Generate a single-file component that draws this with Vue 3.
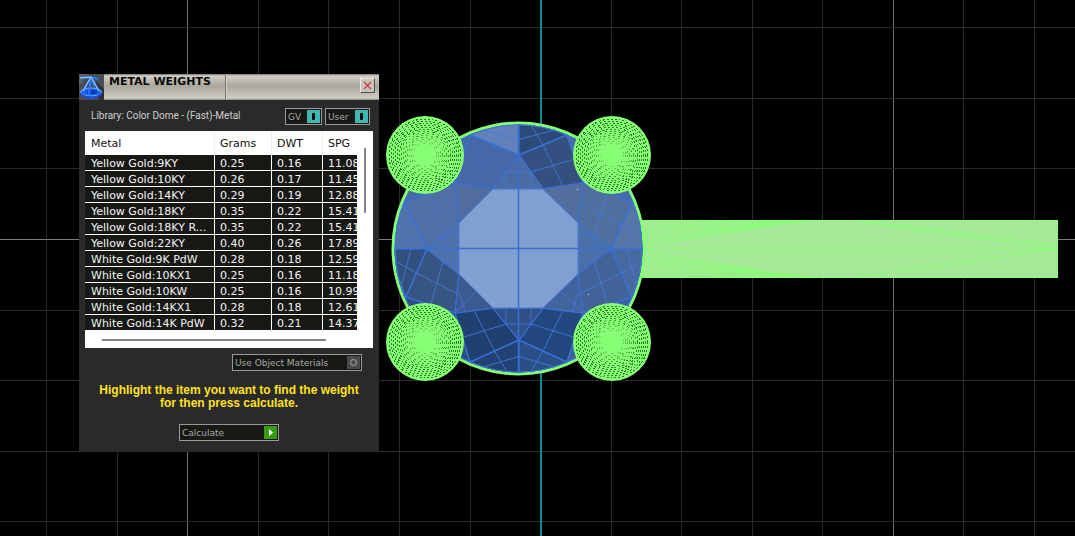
<script setup>
const cols = ['Metal', 'Grams', 'DWT', 'SPG']
const rows = [
  ['Yellow Gold:9KY', '0.25', '0.16', '11.08'],
  ['Yellow Gold:10KY', '0.26', '0.17', '11.45'],
  ['Yellow Gold:14KY', '0.29', '0.19', '12.88'],
  ['Yellow Gold:18KY', '0.35', '0.22', '15.41'],
  ['Yellow Gold:18KY R...', '0.35', '0.22', '15.41'],
  ['Yellow Gold:22KY', '0.40', '0.26', '17.89'],
  ['White Gold:9K PdW', '0.28', '0.18', '12.59'],
  ['White Gold:10KX1', '0.25', '0.16', '11.18'],
  ['White Gold:10KW', '0.25', '0.16', '10.99'],
  ['White Gold:14KX1', '0.28', '0.18', '12.61'],
  ['White Gold:14K PdW', '0.32', '0.21', '14.37'],
]

// Viewport grid: every tenth line is brighter
const gridX = [46, 117, 187, 258, 328, 399, 470, 611, 681, 752, 822, 893, 963, 1034]
const gridY = [27, 98, 168, 239, 310, 380, 451, 521]

// Stone facets, as quads around the table of the gem
const facets = [
  { p: [[519, 155], [470, 135], [455, 183], [493, 189]], f: '#4668a6', soft: true },
  { p: [[519, 155], [567, 135], [583, 183], [543, 189]], f: '#335080' },
  { p: [[427, 249], [405, 202], [455, 183], [459, 223]], f: '#506fa6', soft: true },
  { p: [[611, 249], [632, 202], [583, 183], [578, 223]], f: '#506f9f' },
  { p: [[427, 249], [406, 297], [455, 313], [459, 274]], f: '#375582' },
  { p: [[611, 249], [632, 297], [583, 313], [578, 274]], f: '#426398' },
  { p: [[519, 340], [470, 362], [455, 313], [493, 308]], f: '#1f4070' },
  { p: [[519, 340], [567, 362], [583, 313], [543, 308]], f: '#234880' },
]
// Girdle facets, from each star point out to the rim
const girdle = [
  { p: [[519, 155], [519, 124], [496, 125], [470, 135]], f: '#6382bb' },
  { p: [[519, 155], [519, 124], [542, 125], [567, 135]], f: '#2b4a7a' },
  { p: [[519, 340], [519, 373], [496, 372], [470, 362]], f: '#224274' },
  { p: [[519, 340], [519, 373], [542, 372], [567, 362]], f: '#2a4e86' },
  { p: [[427, 249], [395, 249], [397, 224], [405, 202]], f: '#5173ac', soft: true },
  { p: [[611, 249], [643, 249], [641, 224], [632, 202]], f: '#5676a8', soft: true },
  { p: [[427, 249], [395, 249], [397, 274], [406, 297]], f: '#32507e' },
  { p: [[611, 249], [643, 249], [641, 274], [632, 297]], f: '#4869a0' },
]
// Small triangles between the facets and the table
const stars = [
  { p: [[519, 155], [493, 189], [543, 189]], f: '#4c6ba2' },
  { p: [[519, 340], [493, 308], [543, 308]], f: '#2f5187' },
  { p: [[427, 249], [459, 223], [459, 274]], f: '#4e71ab' },
  { p: [[611, 249], [578, 223], [578, 274]], f: '#4c6fa8' },
  { p: [[455, 183], [493, 189], [459, 223]], f: '#506d9e' },
  { p: [[583, 183], [543, 189], [578, 223]], f: '#526e9d' },
  { p: [[455, 313], [493, 308], [459, 274]], f: '#3a5a90' },
  { p: [[583, 313], [543, 308], [578, 274]], f: '#42649c' },
]
const pts = (p) => p.map((q) => q.join(',')).join(' ')
const mid = (a, b) => `${(a[0] + b[0]) / 2} ${(a[1] + b[1]) / 2}`
const cross = (p) =>
  `M${mid(p[0], p[1])}L${mid(p[2], p[3])}M${mid(p[1], p[2])}L${mid(p[3], p[0])}`

const prongs = [[425, 155], [612, 155], [425, 342], [612, 342]]
const rings = Array.from({ length: 13 }, (_, i) => {
  const r = 12 + i * 2
  return { r, gap: r < 18 ? 4 : r < 26 ? 3 : 2, o: 0.3 + Math.min(i, 8) * 0.06 }
})

// Mesh edges of the shank, fanning from the setting to the rails
const shank = []
for (let i = 0; i <= 6; i++) {
  shank.push(`M644 ${222 + i * 4}L${850 - i * 8} 220`)
  shank.push(`M644 ${276 - i * 4}L${850 - i * 8} 278`)
}
const shankLines = shank.join('') + 'M644 249H1058M1058 249L855 221M1058 249L855 277M1058 245L870 222'
</script>

<template>
  <main class="stage">
    <svg class="viewport" viewBox="0 0 1075 536" preserveAspectRatio="xMinYMin slice" aria-hidden="true">
      <clipPath id="stone"><circle cx="518.500" cy="248.500" r="124" /></clipPath>
      <clipPath id="shank"><rect x="636" y="220" width="422" height="58" /></clipPath>
      <g shape-rendering="crispEdges">
        <rect v-for="x in gridX" :key="'x' + x" :x="x" y="0" width="1" height="536" :fill="x === 187 || x === 893 ? '#707070' : '#2b2b2b'" />
        <rect v-for="y in gridY" :key="'y' + y" x="0" :y="y" width="1075" height="1" :fill="y === 239 ? '#7c7c7c' : '#2b2b2b'" />
        <rect x="540" y="0" width="2" height="536" fill="#098b90" />
        <rect x="636" y="220" width="422" height="58" fill="#a5e998" />
      </g>
      <g clip-path="url(#shank)" fill="none" stroke="#86ff74">
        <path :d="shankLines" />
        <path d="M644 220.500H1057.500V277.500H644" stroke="#90fa80" />
      </g>
      <circle cx="518.500" cy="248.500" r="127" fill="#86ff74" />
      <circle cx="518.500" cy="248.500" r="124" fill="#476aa6" />
      <g clip-path="url(#stone)">
        <path d="M519 249H660V400H519Z" fill="#3b62a0" />
        <path d="M519 249H380V400H519Z" fill="#2b4c82" />
        <g stroke="#3a70d4" stroke-width="1.500" stroke-linejoin="round">
          <polygon v-for="(g, i) in girdle" :key="'g' + i" :points="pts(g.p)" :fill="g.f" stroke-opacity="0.7" />
          <polygon v-for="(f, i) in facets" :key="'f' + i" :points="pts(f.p)" :fill="f.f" />
          <polygon v-for="(s, i) in stars" :key="'s' + i" :points="pts(s.p)" :fill="s.f" stroke-width="1" />
        </g>
      </g>
      <polygon points="493,189 543,189 578,223 578,274 543,308 493,308 459,274 459,223" fill="#819fd0" stroke="#4a7ad2" />
      <g fill="none" stroke="#4579d8" stroke-width="1">
        <path v-for="(f, i) in [...facets, ...girdle]" :key="'c' + i" :d="cross(f.p)" :opacity="f.soft ? 0.4 : 0.85" />
        <path d="M506 172V189M531 172V189M506 172H531M506 308V324M531 308V324M506 324H531M443 236H459M443 262H459M443 236V262M595 236H578M595 262H578M595 236V262M455 313L476 291M583 313L561 291M465 311L459 292M573 311L578 292" opacity="0.8" />
        <path d="M459 189V308M578 189V308" opacity="0" />
        <path d="M395 248.500H643M518.500 124V373" stroke="#386fd2" stroke-width="1.500" />
        <circle cx="518.500" cy="248.500" r="123.500" stroke="#3f79cf" />
      </g>
      <path d="M577 189h1v1h-1zM588 294h1v1h-1z" fill="#d9edff" />
      <g v-for="(c, i) in prongs" :key="'p' + i">
        <circle :cx="c[0]" :cy="c[1]" r="39" fill="#86ff74" />
        <circle v-for="g in rings" :key="g.r" :cx="c[0]" :cy="c[1]" :r="g.r" fill="none" stroke="#0d5f0c" stroke-width="1" :stroke-dasharray="'2 ' + g.gap" :opacity="g.o" shape-rendering="crispEdges" />
      </g>
    </svg>

    <section class="panel" aria-labelledby="panel-title">
      <header class="titlebar">
        <svg class="logo" viewBox="0 0 25 26" aria-hidden="true">
          <rect width="25" height="26" fill="#4b4d53" />
          <path d="M0 0H10L0 12Z" fill="#5d6065" />
          <path d="M17 7L25 15V26H19Z" fill="#303136" />
          <ellipse cx="12" cy="19" rx="11" ry="5" fill="#082d91" />
          <ellipse cx="12" cy="18" rx="10.500" ry="4" fill="#1763e8" stroke="#74b4ff" />
          <ellipse cx="13" cy="18" rx="5" ry="2" fill="#0b38bc" />
          <path d="M1 4L12 3L19 5M12 3L4 17M12 3L20 17M12 3L10 20M13 3L15 12" fill="none" stroke="#2b7bfa" stroke-width="2" />
          <path d="M1 4L12 3L4 17M12 3L20 17" fill="none" stroke="#a5d4ff" />
          <path d="M2 20Q12 28 22 20" fill="none" stroke="#1b4fe0" stroke-width="2" />
        </svg>
        <h1 id="panel-title" class="title">METAL WEIGHTS</h1>
        <div class="title-rest">
          <button class="close" type="button" aria-label="Close">
            <svg viewBox="0 0 9 9" aria-hidden="true"><path d="M1 1L8 8M8 1L1 8" stroke="#c03a40" stroke-width="1.200" fill="none" /></svg>
          </button>
        </div>
      </header>

      <div class="toolbar">
        <p class="library">Library: Color Dome - (Fast)-Metal</p>
        <button class="control" type="button" aria-pressed="true"><span class="label">GV</span><span class="chip on"><i></i></span></button>
        <button class="control user" type="button" aria-pressed="true"><span class="label">User</span><span class="chip on"><i></i></span></button>
      </div>

      <div class="list">
        <div class="clip">
          <table>
            <colgroup><col class="c1" /><col class="c2" /><col class="c3" /><col class="c4" /></colgroup>
            <thead><tr><th v-for="c in cols" :key="c" scope="col">{{ c }}</th></tr></thead>
            <tbody>
              <tr v-for="r in rows" :key="r[0]"><td v-for="(v, i) in r" :key="i">{{ v }}</td></tr>
            </tbody>
          </table>
        </div>
        <div class="vbar"></div>
        <div class="hbar"></div>
      </div>

      <button class="control materials" type="button" aria-pressed="false">
        <span class="label">Use Object Materials</span>
        <span class="chip off"><svg viewBox="0 0 13 13" aria-hidden="true"><circle cx="6.500" cy="6.500" r="3" fill="none" stroke="#a5a5a5" /></svg></span>
      </button>
      <p class="hint">Highlight the item you want to find the weight<br />for then press calculate.</p>
      <button class="control calculate" type="button">
        <span class="label">Calculate</span>
        <span class="chip go"><svg viewBox="0 0 13 13" aria-hidden="true"><path d="M5 3L9 6.500L5 10Z" fill="#fff" /></svg></span>
      </button>
    </section>
  </main>
</template>

<style>
body { margin: 0; background: #000; }
</style>

<style scoped>
* { box-sizing: border-box; }
.stage { position: relative; height: 100vh; min-height: 460px; overflow: hidden; background: #000; font-family: "DejaVu Sans", Verdana, sans-serif; }
.viewport { display: block; width: 100%; height: 100%; }
.panel { position: absolute; left: 79px; top: 74px; width: 300px; padding-bottom: 10px; display: flex; flex-direction: column; background: #2a2a2a; }
.titlebar { display: flex; height: 26px; background: linear-gradient(#77756f 0, #d2d0c8 2px, #c5c2b9 5px, #aaa79d 12px, #c9c6bc 22px, #d4d1c8 24px, #85837d 26px); }
.logo { width: 25px; height: 26px; }
.title { width: 122px; margin: 0; padding: 1px 0 0 5px; font-size: 11px; line-height: 14px; font-weight: 700; color: #080808; border-right: 1px solid #77746d; white-space: nowrap; }
.title-rest { flex: 1; display: flex; justify-content: flex-end; padding: 4px 4px 0 0; border-left: 1px solid #d4d1c8; }
.close { width: 15px; height: 15px; padding: 2px; display: grid; place-items: center; background: #c8c4ba; border: 1px solid; border-color: #eeebe2 #514f4b #514f4b #eeebe2; }
.close svg { width: 9px; height: 9px; }
.toolbar { display: flex; align-items: flex-start; gap: 3px; padding: 8px 9px 6px 12px; }
.library { flex: 1; margin: 0; font: 10px/16px Roboto, "Liberation Sans", sans-serif; color: #cfcfcf; white-space: nowrap; }
.control { display: flex; align-items: center; justify-content: space-between; height: 17px; width: 37px; padding: 0 1px 0 2px; border: 1px solid #999; border-radius: 0; background: #181815; color: #a8a8a8; font: 9px/13px "DejaVu Sans", Verdana, sans-serif; white-space: nowrap; }
.label { padding-top: 2px; }
.user { width: 45px; }
.chip { flex: none; display: grid; place-items: center; width: 13px; height: 13px; }
.chip svg { width: 13px; height: 13px; }
.on { background: #43b6b4; }
.on i { width: 3px; height: 7px; background: #101413; }
.off { background: #4b4b4d; }
.go { background: #389b14; }
.list { display: grid; grid-template-columns: 1fr 16px; grid-template-rows: auto 17px; margin: 0 6px; background: #fff; }
.clip { overflow: hidden; min-width: 0; }
table { width: 288px; table-layout: fixed; border-collapse: separate; border-spacing: 0; font-size: 11px; line-height: 13px; }
.c1 { width: 130px; }
.c2 { width: 57px; }
.c3 { width: 51px; }
.c4 { width: 50px; }
th { height: 24px; padding: 1px 0 0 5px; text-align: left; font-weight: 400; color: #111; border-right: 1px solid #eee; }
td { height: 16px; padding: 2px 0 0 5px; background: #181815; color: #f4f4f4; border-right: 1px solid #fff; border-bottom: 1px solid #fff; overflow: hidden; white-space: nowrap; }
th:first-child, td:first-child { padding-left: 6px; }
.vbar { justify-self: center; width: 2px; height: 65px; margin-top: 17px; background: #858585; }
.hbar { height: 2px; margin: 8px 31px 0 17px; background: #858585; }
.materials { align-self: flex-end; width: 130px; margin: 6px 17px 0 0; }
.hint { margin: 13px 0 14px; text-align: center; font: 700 12px/13px "Liberation Sans", Arial, sans-serif; color: #ffe21a; white-space: nowrap; }
.calculate { align-self: center; width: 100px; }
</style>
